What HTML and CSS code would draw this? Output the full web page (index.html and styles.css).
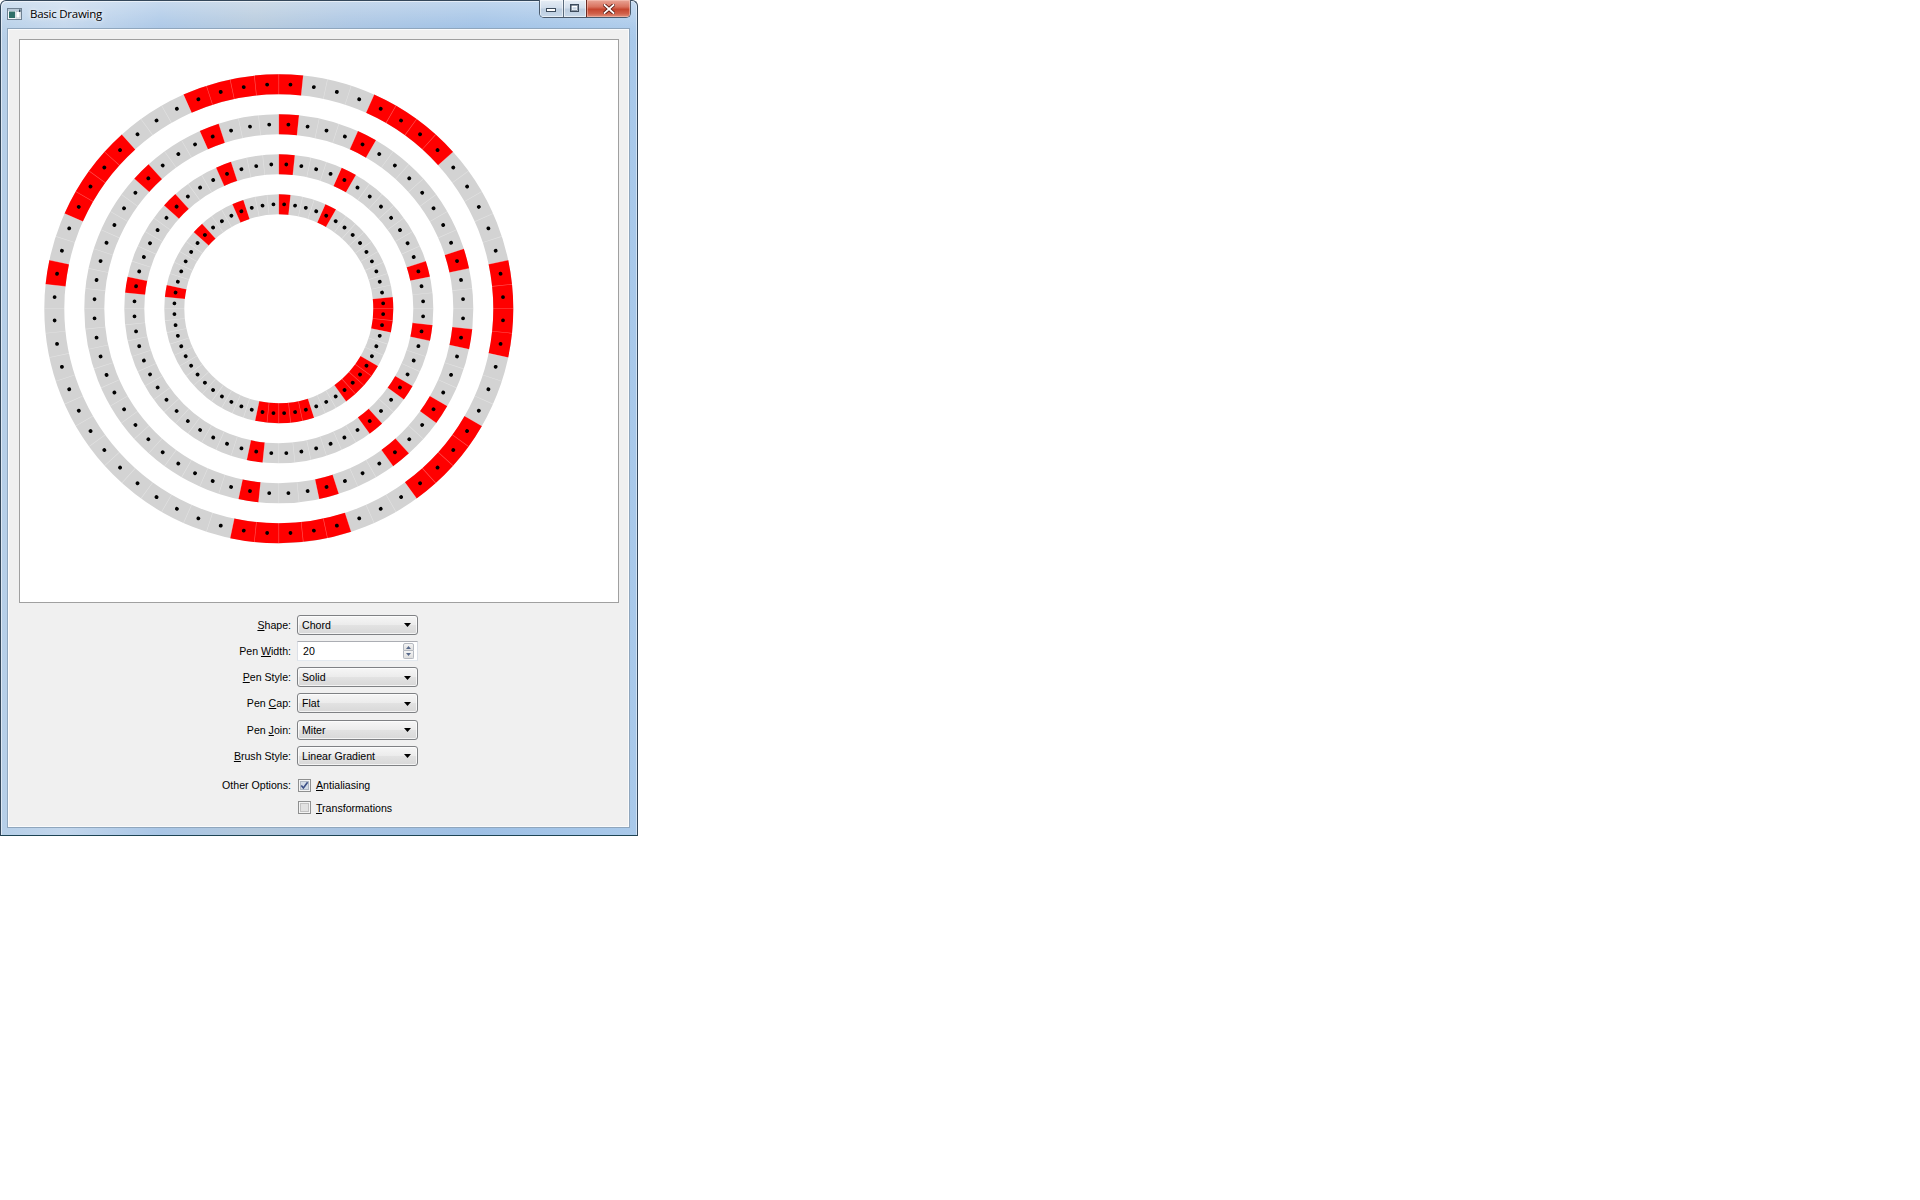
FILE: index.html
```html
<!DOCTYPE html>
<html>
<head>
<meta charset="utf-8">
<title>Basic Drawing</title>
<link rel="stylesheet" href="styles.css">
</head>
<body>
<div class="window">
  <div class="titlebar">
    <svg class="appicon" width="15" height="12" viewBox="0 0 15 12">
      <rect x="0.5" y="0.5" width="14" height="11" fill="#f4f7fa" stroke="#6f8192"/>
      <rect x="1" y="1" width="13" height="2" fill="#b9c9d8"/>
      <rect x="2" y="3.5" width="6" height="6.5" fill="#2f6f68"/>
      <rect x="9" y="3.5" width="4" height="6.5" fill="#ffffff" stroke="#9aa9b6" stroke-width="0.6"/>
      <rect x="12" y="1.5" width="1.5" height="2.5" fill="#30485c"/>
    </svg>
    <span class="title">Basic Drawing</span>
    <div class="caption">
      <div class="cbtn min">
        <svg width="11" height="5" viewBox="0 0 11 5"><rect x="0.5" y="0.5" width="9" height="3" fill="#fff" stroke="#3c4b5c"/></svg>
      </div>
      <div class="cbtn max">
        <svg width="10" height="9" viewBox="0 0 10 9"><rect x="0.5" y="0.5" width="8" height="7" fill="none" stroke="#3c4b5c"/><rect x="2" y="2.5" width="5" height="3.5" fill="none" stroke="#fff"/><rect x="1.5" y="1.5" width="6" height="5" fill="none" stroke="#3c4b5c" stroke-width="0.5"/></svg>
      </div>
      <div class="cbtn close">
        <svg width="12" height="10" viewBox="0 0 12 10"><path d="M1.5 1 L10.5 9 M10.5 1 L1.5 9" stroke="#5a1a12" stroke-width="3.6" stroke-linecap="square"/><path d="M1.5 1 L10.5 9 M10.5 1 L1.5 9" stroke="#fff" stroke-width="1.8" stroke-linecap="square"/></svg>
      </div>
    </div>
  </div>
  <div class="client">
    <div class="canvas">
      <svg class="drawing" width="598" height="562" viewBox="0 0 598 562">
        <g transform="translate(258.8 268.8) scale(1 -1)" fill="none">
          <circle r="224.5" stroke="#d3d3d3" stroke-width="20"/>
          <circle r="224.5" stroke="#ff0000" stroke-width="20" pathLength="60" stroke-dasharray="2 5 4 3 5 3 4 2 1 14 5 3 4 3 2 0"/>
          <circle r="224.5" stroke="#ffffff" stroke-opacity="0.35" stroke-width="20" pathLength="60" stroke-dasharray="0.026 0.974" stroke-dashoffset="0.013"/>
          <circle r="224.5" stroke="#000" stroke-width="3.8" stroke-linecap="round" pathLength="60" stroke-dasharray="0.001 0.999" stroke-dashoffset="0.5"/>

          <circle r="184.5" stroke="#d3d3d3" stroke-width="20"/>
          <circle r="184.5" stroke="#ff0000" stroke-width="20" pathLength="60" stroke-dasharray="0 2 1 7 1 3 1 3 1 3 1 20 1 3 1 3 1 2 1 3 1 1"/>
          <circle r="184.5" stroke="#ffffff" stroke-opacity="0.35" stroke-width="20" pathLength="60" stroke-dasharray="0.031 0.969" stroke-dashoffset="0.0155"/>
          <circle r="184.5" stroke="#000" stroke-width="3.8" stroke-linecap="round" pathLength="60" stroke-dasharray="0.001 0.999" stroke-dashoffset="0.5"/>

          <circle r="144.5" stroke="#d3d3d3" stroke-width="20"/>
          <circle r="144.5" stroke="#ff0000" stroke-width="20" pathLength="60" stroke-dasharray="0 2 1 7 1 3 1 3 1 3 1 5 1 14 1 7 1 2 1 3 1 1"/>
          <circle r="144.5" stroke="#ffffff" stroke-opacity="0.35" stroke-width="20" pathLength="60" stroke-dasharray="0.04 0.96" stroke-dashoffset="0.02"/>
          <circle r="144.5" stroke="#000" stroke-width="3.8" stroke-linecap="round" pathLength="60" stroke-dasharray="0.001 0.999" stroke-dashoffset="0.5"/>

          <circle r="104.5" stroke="#d3d3d3" stroke-width="20"/>
          <circle r="104.5" stroke="#ff0000" stroke-width="20" pathLength="60" stroke-dasharray="1 9 1 3 1 3 1 3 1 5 1 14 5 3 4 3 2 0"/>
          <circle r="104.5" stroke="#ffffff" stroke-opacity="0.35" stroke-width="20" pathLength="60" stroke-dasharray="0.055 0.945" stroke-dashoffset="0.0275"/>
          <circle r="104.5" stroke="#000" stroke-width="3.8" stroke-linecap="round" pathLength="60" stroke-dasharray="0.001 0.999" stroke-dashoffset="0.5"/>
        </g>
      </svg>
    </div>

    <div class="fields">
      <span class="lbl"><u>S</u>hape:</span>
      <div class="combo"><span>Chord</span><svg class="arrow" width="7" height="4" viewBox="0 0 7 4"><path d="M0 0H7L3.5 4Z" fill="#000"/></svg></div>

      <span class="lbl">Pen <u>W</u>idth:</span>
      <div class="spin"><span>20</span>
        <div class="spinbtns">
          <div class="sb up"><svg width="5" height="3" viewBox="0 0 5 3"><path d="M0 3H5L2.5 0Z" fill="#56688a"/></svg></div>
          <div class="sb down"><svg width="5" height="3" viewBox="0 0 5 3"><path d="M0 0H5L2.5 3Z" fill="#56688a"/></svg></div>
        </div>
      </div>

      <span class="lbl"><u>P</u>en Style:</span>
      <div class="combo"><span>Solid</span><svg class="arrow" width="7" height="4" viewBox="0 0 7 4"><path d="M0 0H7L3.5 4Z" fill="#000"/></svg></div>

      <span class="lbl">Pen <u>C</u>ap:</span>
      <div class="combo"><span>Flat</span><svg class="arrow" width="7" height="4" viewBox="0 0 7 4"><path d="M0 0H7L3.5 4Z" fill="#000"/></svg></div>

      <span class="lbl">Pen <u>J</u>oin:</span>
      <div class="combo"><span>Miter</span><svg class="arrow" width="7" height="4" viewBox="0 0 7 4"><path d="M0 0H7L3.5 4Z" fill="#000"/></svg></div>

      <span class="lbl"><u>B</u>rush Style:</span>
      <div class="combo"><span>Linear Gradient</span><svg class="arrow" width="7" height="4" viewBox="0 0 7 4"><path d="M0 0H7L3.5 4Z" fill="#000"/></svg></div>
    </div>

    <div class="options">
      <span class="lbl">Other Options:</span>
      <div class="check">
        <svg class="box" width="13" height="13" viewBox="0 0 13 13">
          <rect x="0.5" y="0.5" width="12" height="12" fill="#f4f4f4" stroke="#8e8f8f"/>
          <rect x="2.5" y="2.5" width="8" height="8" fill="#d3dbe6" stroke="#b0b8c4"/>
          <path d="M3.3 6.4 L5.4 9 L9.6 3.3" fill="none" stroke="#3b4f86" stroke-width="1.6"/>
        </svg>
        <span><u>A</u>ntialiasing</span>
      </div>
      <span class="lbl"></span>
      <div class="check">
        <svg class="box" width="13" height="13" viewBox="0 0 13 13">
          <rect x="0.5" y="0.5" width="12" height="12" fill="#f4f4f4" stroke="#8e8f8f"/>
          <rect x="2.5" y="2.5" width="8" height="8" fill="#e2e2e2" stroke="#c2c2c2"/>
        </svg>
        <span><u>T</u>ransformations</span>
      </div>
    </div>
  </div>
</div>
</body>
</html>
```

FILE: styles.css
```css
* {
  box-sizing: border-box;
}

html,
body {
  margin: 0;
  background: #ffffff;
}

body {
  width: 1920px;
  height: 1200px;
  overflow: hidden;
  font-family: "Liberation Sans", Arial, sans-serif;
}

.window {
  width: 638px;
  height: 836px;
  border: 1px solid #34475a;
  border-bottom-color: #1d4454;
  border-radius: 6px 6px 0 0;
  padding: 0 7px 7px 6px;
  display: flex;
  flex-direction: column;
  background:
    linear-gradient(180deg, rgba(255, 255, 255, 0.35) 0px, rgba(255, 255, 255, 0.05) 27px, rgba(255, 255, 255, 0) 40px),
    linear-gradient(90deg, #b6cfe8 0%, #c2d6ec 10%, #a9c6e6 25%, #b3c8dc 40%, #a7c3e2 55%, #9ec0e5 75%, #a9c9ea 100%);
  box-shadow: inset 1px 1px 0 rgba(255, 255, 255, 0.55), inset -1px 0 0 rgba(255, 255, 255, 0.45);
}

.titlebar {
  height: 27px;
  display: flex;
  align-items: center;
}

.appicon {
  margin-top: -1px;
  flex: none;
}

.title {
  margin-left: 8px;
  margin-top: -2px;
  font-family: "Open Sans", "Liberation Sans", sans-serif;
  font-size: 11.5px;
  letter-spacing: -0.25px;
  color: #000000;
  text-shadow: 0 0 6px rgba(255, 255, 255, 0.9), 0 0 3px rgba(255, 255, 255, 0.9);
}

.caption {
  margin-left: auto;
  margin-right: -1px;
  margin-top: -1px;
  align-self: flex-start;
  height: 18px;
  display: flex;
  border: 1px solid #4a5a6c;
  border-top: none;
  border-radius: 0 0 5px 5px;
  overflow: hidden;
}

.cbtn {
  display: flex;
  align-items: center;
  justify-content: center;
  height: 100%;
}

.cbtn.min {
  width: 23px;
  padding-top: 4px;
  background: linear-gradient(180deg, #e6edf5 0%, #d2deec 45%, #bccddf 55%, #c9d9ea 100%);
  box-shadow: inset 0 0 0 1px rgba(255, 255, 255, 0.55);
}

.cbtn.max {
  width: 23px;
  border-left: 1px solid #5a6a7c;
  background: linear-gradient(180deg, #e6edf5 0%, #d2deec 45%, #bccddf 55%, #c9d9ea 100%);
  box-shadow: inset 0 0 0 1px rgba(255, 255, 255, 0.55);
}

.cbtn.close {
  width: 44px;
  border-left: 1px solid #6a2a22;
  background: linear-gradient(180deg, #e9a596 0%, #d9735f 40%, #c6462f 55%, #d1614a 80%, #e0907c 100%);
  box-shadow: inset 0 0 0 1px rgba(255, 210, 200, 0.45);
}

.client {
  flex: 1;
  background: #f0f0f0;
  border: 1px solid #8fa6bd;
  box-shadow: inset 0 0 0 1px #fafbfc;
  display: flex;
  flex-direction: column;
}

.canvas {
  width: 600px;
  height: 564px;
  margin: 10px 0 0 11px;
  background: #ffffff;
  border: 1px solid #a0a0a0;
}

.drawing {
  display: block;
}

.fields,
.options {
  display: grid;
  grid-template-columns: 72px 121px;
  column-gap: 6px;
  justify-content: center;
  align-items: center;
  font-size: 10.6px;
  color: #000000;
}

.fields {
  margin-top: 11.5px;
  grid-auto-rows: 20px;
  row-gap: 6.3px;
}

.options {
  margin-top: 11px;
  grid-auto-rows: 17px;
  row-gap: 5.5px;
}

.lbl {
  text-align: right;
  white-space: nowrap;
}

.combo {
  height: 20px;
  display: flex;
  align-items: center;
  justify-content: space-between;
  padding: 0 6px 0 4px;
  border: 1px solid #7f8184;
  border-radius: 3px;
  background: linear-gradient(180deg, #f6f6f6 0%, #ececec 48%, #e2e2e2 52%, #d8d8d8 100%);
  box-shadow: inset 0 0 0 1px rgba(255, 255, 255, 0.7);
  white-space: nowrap;
}

.arrow {
  flex: none;
  margin-top: 1px;
}

.spin {
  height: 20px;
  display: flex;
  align-items: center;
  justify-content: space-between;
  padding: 0 3px 0 5px;
  background: #ffffff;
  border: 1px solid #dbdfe6;
  border-top-color: #abadb3;
  border-bottom-color: #e3e9ef;
}

.spinbtns {
  display: flex;
  flex-direction: column;
  width: 11px;
  height: 16px;
}

.sb {
  flex: 1;
  display: flex;
  align-items: center;
  justify-content: center;
  border: 1px solid #b5b9c0;
  background: linear-gradient(180deg, #f4f4f4, #dedede);
}

.sb.up {
  border-radius: 2px 2px 0 0;
}

.sb.down {
  border-top: none;
  border-radius: 0 0 2px 2px;
}

.check {
  display: flex;
  align-items: center;
  gap: 5px;
  padding-left: 1px;
  white-space: nowrap;
}

.box {
  flex: none;
  display: block;
}
```
